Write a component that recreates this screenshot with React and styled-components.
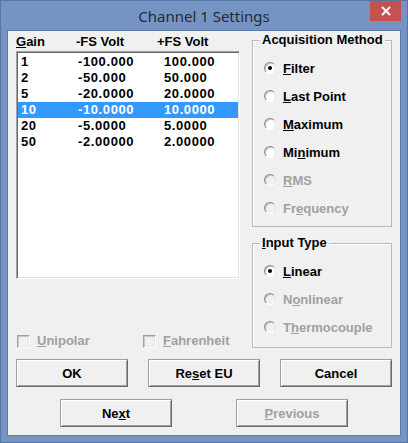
import styled, { createGlobalStyle } from 'styled-components';

const GlobalStyle = createGlobalStyle`
  html, body {
    margin: 0;
    padding: 0;
    background: #7594c4;
  }
  * {
    box-sizing: border-box;
  }
`;

const Window = styled.div`
  width: 408px;
  height: 443px;
  background: #7594c4;
  border: 1px solid #5875a6;
  padding: 0 6px 6px;
  display: flex;
  flex-direction: column;
  font-family: 'Liberation Sans', Arial, sans-serif;
  font-size: 13px;
  font-weight: bold;
  color: #000;
`;

const TitleBar = styled.div`
  height: 29px;
  display: grid;
  grid-template-columns: 1fr auto 1fr;
`;

const Title = styled.div`
  grid-column: 2;
  margin-top: 5px;
  line-height: 20px;
  font-family: 'Noto Sans', 'Open Sans', sans-serif;
  font-weight: normal;
  font-size: 15px;
  color: #262a33;
`;

const CloseButton = styled.div`
  grid-column: 3;
  justify-self: end;
  width: 31px;
  height: 20px;
  background: #c75050;
  display: flex;
  align-items: center;
  justify-content: center;
`;

const Client = styled.div`
  height: 406px;
  background: #f0f0f0;
  border: 1px solid #5d7bab;
  padding: 0 8px;
  display: flex;
  flex-direction: column;
`;

const TopSection = styled.div`
  display: grid;
  grid-template-columns: 224px 140px;
  column-gap: 12px;
`;

const LeftColumn = styled.div`
  display: flex;
  flex-direction: column;
`;

const HeaderRow = styled.div`
  height: 20px;
  padding-top: 3px;
  display: grid;
  grid-template-columns: 60px 81px auto;
  line-height: 16px;
`;

const ListBox = styled.div`
  height: 228px;
  background: #fff;
  border: 1px solid;
  border-color: #a0a0a0 #fff #fff #a0a0a0;
  box-shadow: inset 1px 1px #696969, inset -1px -1px #e3e3e3;
  padding: 2px 1px;
`;

const ListRow = styled.div`
  height: 16px;
  line-height: 16px;
  padding-left: 3px;
  display: grid;
  grid-template-columns: 57px 86px auto;
  letter-spacing: 0.6px;
  background: ${(p) => (p.$selected ? '#3399ff' : 'transparent')};
  color: ${(p) => (p.$selected ? '#fff' : '#000')};
`;

const CheckRow = styled.div`
  margin-top: 54px;
  height: 16px;
  padding-left: 1px;
  display: grid;
  grid-template-columns: 126px auto;
  align-items: center;
`;

const CheckItem = styled.label`
  display: flex;
  align-items: center;
  gap: 7px;
  line-height: 16px;
  color: ${(p) => (p.$disabled ? '#a0a0a0' : '#000')};
`;

const CheckBox = styled.span`
  width: 13px;
  height: 13px;
  border: 1px solid;
  border-color: #a0a0a0 #fff #fff #a0a0a0;
  box-shadow: inset 1px 1px #c8c8c8, inset -1px -1px #e8e8e8;
  background: #f0f0f0;
`;

const RightColumn = styled.div`
  padding-top: 9px;
  display: flex;
  flex-direction: column;
  gap: 16px;
`;

const GroupBox = styled.div`
  position: relative;
  height: ${(p) => p.$height}px;
  border: 1px solid #b9b9b9;
  box-shadow: inset 1px 1px #fff;
  padding: 13px 0 0 11px;
`;

const Legend = styled.span`
  position: absolute;
  top: -9px;
  left: 7px;
  padding: 0 2px;
  line-height: 16px;
  background: #f0f0f0;
`;

const RadioRow = styled.div`
  height: 28px;
  display: flex;
  align-items: center;
  gap: 7px;
  color: ${(p) => (p.$disabled ? '#a0a0a0' : '#000')};
`;

const RadioCircle = styled.span`
  width: 12px;
  height: 12px;
  border-radius: 50%;
  background: ${(p) => (p.$disabled ? '#f0f0f0' : '#fff')};
  border: 1px solid;
  border-color: #8c8c8c #e3e3e3 #fff #8c8c8c;
  box-shadow: inset 1px 1px #c4c4c4;
  display: flex;
  align-items: center;
  justify-content: center;
  &::after {
    content: '';
    width: 4px;
    height: 4px;
    border-radius: 50%;
    background: #000;
    display: ${(p) => (p.$checked ? 'block' : 'none')};
  }
`;

const ButtonRow = styled.div`
  margin-top: ${(p) => p.$top}px;
  display: flex;
  justify-content: center;
  gap: ${(p) => p.$gap}px;
`;

const Button = styled.div`
  width: 112px;
  height: 28px;
  display: flex;
  align-items: center;
  justify-content: center;
  background: #f0f0f0;
  border: 1px solid;
  border-color: #a0a0a0 #696969 #696969 #a0a0a0;
  box-shadow: inset 1px 1px #fff, inset -1px -1px #a0a0a0;
  color: ${(p) => (p.$disabled ? '#a0a0a0' : '#000')};
`;

const rows = [
  ['1', '-100.000', '100.000'],
  ['2', '-50.000', '50.000'],
  ['5', '-20.0000', '20.0000'],
  ['10', '-10.0000', '10.0000'],
  ['20', '-5.0000', '5.0000'],
  ['50', '-2.00000', '2.00000'],
];

// label, underline index, checked, disabled
const methods = [
  ['Filter', 0, true, false],
  ['Last Point', 0, false, false],
  ['Maximum', 0, false, false],
  ['Minimum', 2, false, false],
  ['RMS', 0, false, true],
  ['Frequency', 2, false, true],
];

const inputTypes = [
  ['Linear', 0, true, false],
  ['Nonlinear', 1, false, true],
  ['Thermocouple', 1, false, true],
];

function Mnemonic({ text, index }) {
  return (
    <span>
      {text.slice(0, index)}
      <u>{text[index]}</u>
      {text.slice(index + 1)}
    </span>
  );
}

function Radio({ label, index, checked, disabled }) {
  return (
    <RadioRow $disabled={disabled}>
      <RadioCircle $checked={checked} $disabled={disabled} />
      <Mnemonic text={label} index={index} />
    </RadioRow>
  );
}

export default function App() {
  return (
    <>
      <GlobalStyle />
      <Window>
        <TitleBar>
          <Title>Channel 1 Settings</Title>
          <CloseButton>
            <svg width="10" height="10" viewBox="0 0 10 10">
              <path d="M1 1 L9 9 M9 1 L1 9" stroke="#fff" strokeWidth="2" />
            </svg>
          </CloseButton>
        </TitleBar>
        <Client>
          <TopSection>
            <LeftColumn>
              <HeaderRow>
                <Mnemonic text="Gain" index={0} />
                <span>-FS Volt</span>
                <span>+FS Volt</span>
              </HeaderRow>
              <ListBox>
                {rows.map((r, i) => (
                  <ListRow key={r[0]} $selected={i === 3}>
                    <span>{r[0]}</span>
                    <span>{r[1]}</span>
                    <span>{r[2]}</span>
                  </ListRow>
                ))}
              </ListBox>
              <CheckRow>
                <CheckItem $disabled>
                  <CheckBox />
                  <Mnemonic text="Unipolar" index={0} />
                </CheckItem>
                <CheckItem $disabled>
                  <CheckBox />
                  <Mnemonic text="Fahrenheit" index={0} />
                </CheckItem>
              </CheckRow>
            </LeftColumn>
            <RightColumn>
              <GroupBox $height={187}>
                <Legend>Acquisition Method</Legend>
                {methods.map(([label, idx, checked, disabled]) => (
                  <Radio key={label} label={label} index={idx} checked={checked} disabled={disabled} />
                ))}
              </GroupBox>
              <GroupBox $height={105}>
                <Legend>
                  <Mnemonic text="Input Type" index={0} />
                </Legend>
                {inputTypes.map(([label, idx, checked, disabled]) => (
                  <Radio key={label} label={label} index={idx} checked={checked} disabled={disabled} />
                ))}
              </GroupBox>
            </RightColumn>
          </TopSection>
          <ButtonRow $top={10} $gap={20}>
            <Button>OK</Button>
            <Button>
              <Mnemonic text="Reset EU" index={2} />
            </Button>
            <Button>Cancel</Button>
          </ButtonRow>
          <ButtonRow $top={12} $gap={64}>
            <Button>
              <Mnemonic text="Next" index={2} />
            </Button>
            <Button $disabled>
              <Mnemonic text="Previous" index={0} />
            </Button>
          </ButtonRow>
        </Client>
      </Window>
    </>
  );
}
